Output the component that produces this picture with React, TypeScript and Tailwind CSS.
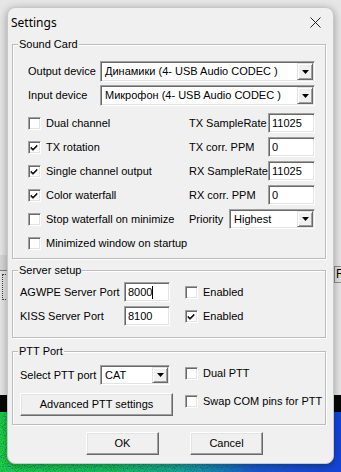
import React from "react";

const font = { fontFamily: '"Liberation Sans", Arial, sans-serif' };

function Check({ checked }: { checked?: boolean }) {
  return (
    <div className="w-[13px] h-[13px] bg-white border border-t-[#a0a0a0] border-l-[#a0a0a0] border-b-white border-r-white shadow-[inset_1px_1px_0_#696969,inset_-1px_-1px_0_#e3e3e3] flex items-center justify-center shrink-0">
      {checked && (
        <svg width="9" height="9" viewBox="0 0 9 9">
          <path d="M1 4 L3 6 L7 2 L7 3.5 L3 7.5 L1 5.5 Z" fill="#000" stroke="#000" strokeWidth="0.6" />
        </svg>
      )}
    </div>
  );
}

function CheckRow({ checked, label }: { checked?: boolean; label: string }) {
  return (
    <div className="flex items-center gap-[5px]">
      <Check checked={checked} />
      <span className="whitespace-nowrap">{label}</span>
    </div>
  );
}

function TextBox({ value, w, h = 20, caret }: { value: string; w: number; h?: number; caret?: boolean }) {
  return (
    <div
      className="bg-white border border-t-[#a0a0a0] border-l-[#a0a0a0] border-b-white border-r-white shadow-[inset_1px_1px_0_#696969,inset_-1px_-1px_0_#e3e3e3] flex items-center pl-[3px] leading-none"
      style={{ width: w, height: h }}
    >
      <span>{value}</span>
      {caret && <span className="w-px h-[13px] bg-black" />}
    </div>
  );
}

function Arrow() {
  return (
    <div className="w-[16px] h-full bg-[#f0f0f0] border border-t-[#e3e3e3] border-l-[#e3e3e3] border-b-[#696969] border-r-[#696969] shadow-[inset_1px_1px_0_#fff,inset_-1px_-1px_0_#a0a0a0] flex items-center justify-center shrink-0">
      <svg width="7" height="4" viewBox="0 0 7 4">
        <path d="M0 0 H7 L3.5 4 Z" fill="#000" />
      </svg>
    </div>
  );
}

function Combo({ value, w, h = 21 }: { value: string; w: number; h?: number }) {
  return (
    <div
      className="bg-white border border-t-[#a0a0a0] border-l-[#a0a0a0] border-b-white border-r-white shadow-[inset_1px_1px_0_#696969,inset_-1px_-1px_0_#e3e3e3] flex items-stretch p-[1px]"
      style={{ width: w, height: h }}
    >
      <div className="flex-1 flex items-center pl-[3px] whitespace-nowrap overflow-hidden leading-none">{value}</div>
      <Arrow />
    </div>
  );
}

function Button({ label, w, h = 23 }: { label: string; w: number; h?: number }) {
  return (
    <div
      className="bg-[#f0f0f0] border border-t-white border-l-white border-b-[#696969] border-r-[#696969] shadow-[inset_-1px_-1px_0_#a0a0a0,inset_1px_1px_0_#e3e3e3] flex items-center justify-center"
      style={{ width: w, height: h }}
    >
      {label}
    </div>
  );
}

function Group({ title, children, className }: { title: string; children: React.ReactNode; className?: string }) {
  return (
    <div className={"relative border border-[#bcbcbc] shadow-[1px_1px_0_#fff,inset_1px_1px_0_#fff] " + (className || "")}>
      <div className="absolute -top-[8px] left-[5px] bg-[#f0f0f0] px-[1px] leading-[14px]">{title}</div>
      {children}
    </div>
  );
}

function Waterfall() {
  return (
    <svg width="341" height="60" className="block">
      <defs>
        <linearGradient id="wg" x1="0" x2="1" y1="0" y2="0">
          <stop offset="0" stopColor="#1fd83a" />
          <stop offset="0.35" stopColor="#19c85a" />
          <stop offset="0.55" stopColor="#1aa8a0" />
          <stop offset="0.75" stopColor="#1a5ad8" />
          <stop offset="1" stopColor="#1840e0" />
        </linearGradient>
        <filter id="nz">
          <feTurbulence type="fractalNoise" baseFrequency="0.9" numOctaves="2" seed="3" />
          <feColorMatrix type="matrix" values="0 0 0 0 0  0 0 0 0 0.1  0 0 0 0 0.3  0 0 0 1.6 -0.7" />
        </filter>
      </defs>
      <rect width="341" height="60" fill="url(#wg)" />
      <rect width="341" height="60" filter="url(#nz)" />
    </svg>
  );
}

export default function App() {
  return (
    <div className="relative w-[341px] h-[472px] overflow-hidden bg-[#e6e6e6] text-[11px] text-black" style={font}>
      {/* backdrop window pieces */}
      <div className="absolute left-0 top-[255px] w-[8px] h-[16px] bg-[#d6d6d6] border-b border-[#808080]" />
      <div className="absolute left-[2px] top-[274px] w-[6px] h-[26px] border border-dotted border-[#404040]" />
      <div className="absolute left-[334px] top-[266px] w-[10px] h-[17px] bg-[#e0e0e0] border border-[#909090] pl-[1px] leading-[15px] text-[12px]">R</div>
      <div className="absolute left-0 top-[395px] w-[341px] h-[18px] bg-[#080808]" />
      <div className="absolute left-0 top-[412px] w-[341px] h-[60px]">
        <Waterfall />
      </div>

      {/* dialog */}
      <div className="absolute left-[7px] top-[7px] w-[327px] h-[457px] bg-[#f0f0f0] rounded-[8px] border border-[#c8c8c8] shadow-[0_2px_8px_rgba(0,0,0,0.35)] flex flex-col">
        <div className="h-[29px] flex items-center justify-between pl-[3px] pr-[12px]">
          <span className="text-[12px]" style={{ fontFamily: '"Segoe UI", "Noto Sans", sans-serif' }}>Settings</span>
          <svg width="11" height="11" viewBox="0 0 11 11">
            <path d="M0.5 0.5 L10.5 10.5 M10.5 0.5 L0.5 10.5" stroke="#222" strokeWidth="1" />
          </svg>
        </div>
        <div className="flex flex-col pl-[4px] pr-[7px]">
          <Group title="Sound Card" className="mt-[7px] h-[215px] pt-[16px] pl-[15px] pr-[10px]">
            <div className="flex items-center justify-between h-[21px]">
              <span>Output device</span>
              <Combo value="Динамики (4- USB Audio CODEC )" w={215} />
            </div>
            <div className="flex items-center justify-between h-[21px] mt-[3px]">
              <span>Input device</span>
              <Combo value="Микрофон (4- USB Audio CODEC )" w={215} />
            </div>
            <div className="mt-[5px] grid grid-cols-[161px_1fr] auto-rows-[24px] items-center">
              <CheckRow label="Dual channel" />
              <div className="flex items-center justify-between">
                <span>TX SampleRate</span>
                <TextBox value="11025" w={47} />
              </div>
              <CheckRow checked label="TX rotation" />
              <div className="flex items-center justify-between">
                <span>TX corr. PPM</span>
                <TextBox value="0" w={47} />
              </div>
              <CheckRow checked label="Single channel output" />
              <div className="flex items-center justify-between">
                <span>RX SampleRate</span>
                <TextBox value="11025" w={47} />
              </div>
              <CheckRow checked label="Color waterfall" />
              <div className="flex items-center justify-between">
                <span>RX corr. PPM</span>
                <TextBox value="0" w={47} />
              </div>
              <CheckRow label="Stop waterfall on minimize" />
              <div className="flex items-center justify-between">
                <span>Priority</span>
                <Combo value="Highest" w={86} h={20} />
              </div>
              <CheckRow label="Minimized window on startup" />
            </div>
          </Group>

          <Group title="Server setup" className="mt-[11px] h-[68px] pt-[9px] pl-[7px]">
            <div className="grid grid-cols-[104px_46px_1fr] auto-rows-[24px] items-center">
              <span>AGWPE Server Port</span>
              <TextBox value="8000" w={46} caret />
              <div className="pl-[15px]"><CheckRow label="Enabled" /></div>
              <span>KISS Server Port</span>
              <TextBox value="8100" w={46} />
              <div className="pl-[15px]"><CheckRow checked label="Enabled" /></div>
            </div>
          </Group>

          <Group title="PTT Port" className="mt-[13px] h-[74px] pt-[13px] pl-[7px]">
            <div className="flex items-center h-[20px]">
              <span className="w-[80px]">Select PTT port</span>
              <Combo value="CAT" w={70} h={20} />
              <div className="pl-[15px] -mt-[3px]"><CheckRow label="Dual PTT" /></div>
            </div>
            <div className="flex items-start mt-[8px]">
              <Button label="Advanced PTT settings" w={153} />
              <div className="pl-[12px] pt-[-1px]"><CheckRow label="Swap COM pins for PTT" /></div>
            </div>
          </Group>

          <div className="flex mt-[7px] pl-[74px] gap-[31px]">
            <Button label="OK" w={73} />
            <Button label="Cancel" w={73} />
          </div>
        </div>
      </div>
    </div>
  );
}
